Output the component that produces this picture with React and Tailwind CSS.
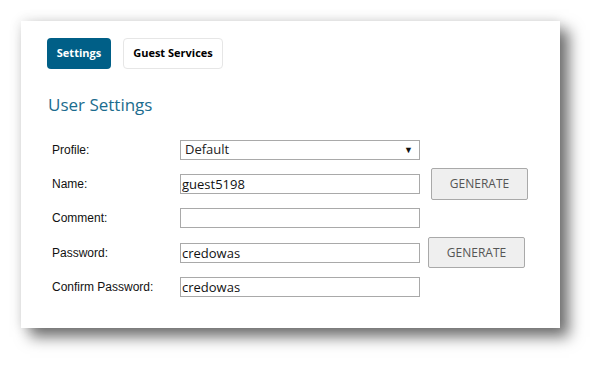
import { useState } from 'react'

const rows = [
  { label: 'Profile:', kind: 'select', value: 'Default', h: 'h-[33px]' },
  { label: 'Name:', kind: 'input', value: 'guest5198', h: 'h-[35px]', gen: 'ml-[11px] w-[97px] h-[32px]' },
  { label: 'Comment:', kind: 'input', value: '', h: 'h-[34px]' },
  { label: 'Password:', kind: 'input', value: 'credowas', h: 'h-[35px]', gen: 'ml-[8px] w-[97px] h-[31px]' },
  { label: 'Confirm Password:', kind: 'input', value: 'credowas', h: 'h-[34px]' },
]

function Field({ row }) {
  if (row.kind === 'select') {
    return (
      <div className="w-[240px] h-[20px] border border-[#a9a9a9] bg-white flex items-center justify-between pl-[4px] pr-[6px] text-[13px] text-[#222] font-['Open_Sans',sans-serif]">
        <span>{row.value}</span>
        <span className="text-[9px] text-[#111]">▼</span>
      </div>
    )
  }
  return (
    <input
      defaultValue={row.value}
      className="w-[240px] h-[20px] border border-[#a9a9a9] bg-white px-[1px] text-[13px] text-[#111] font-['Open_Sans',sans-serif] outline-none"
    />
  )
}

export default function App() {
  const [tab, setTab] = useState('settings')

  return (
    <div className="w-[602px] h-[370px] bg-white pt-[21px] pl-[21px]">
      <div className="w-[539px] h-[307px] bg-white shadow-[9px_9px_14px_rgba(0,0,0,0.55),0_0_12px_rgba(0,0,0,0.12)] pl-[26px] pt-[17px]">
        <div className="flex gap-[12px] font-['Open_Sans',sans-serif] text-[11px] font-bold">
          <button
            onClick={() => setTab('settings')}
            className="w-[64px] h-[31px] rounded-[4px] bg-[#005f87] text-white"
          >
            Settings
          </button>
          <button
            onClick={() => setTab('guest')}
            className="w-[100px] h-[31px] rounded-[4px] border border-[#e6e6e6] bg-white text-black"
          >
            Guest Services
          </button>
        </div>

        <h2 className="mt-[25px] ml-[1px] text-[17px] leading-[22px] text-[#1b6c8e] font-['Open_Sans',sans-serif]">
          User Settings
        </h2>

        <div className="mt-[17px] ml-[5px] flex flex-col">
          {rows.map(row => (
            <div key={row.label} className={`flex items-center ${row.h}`}>
              <div className="w-[128px] text-[12px] text-[#111] font-['Liberation_Sans',Arial,sans-serif]">
                {row.label}
              </div>
              <Field row={row} />
              {row.gen && (
                <button
                  className={`${row.gen} bg-[#efefef] border border-[#a9a9a9] rounded-[2px] text-[12px] text-[#555] font-['Open_Sans',sans-serif]`}
                >
                  GENERATE
                </button>
              )}
            </div>
          ))}
        </div>
      </div>
    </div>
  )
}
